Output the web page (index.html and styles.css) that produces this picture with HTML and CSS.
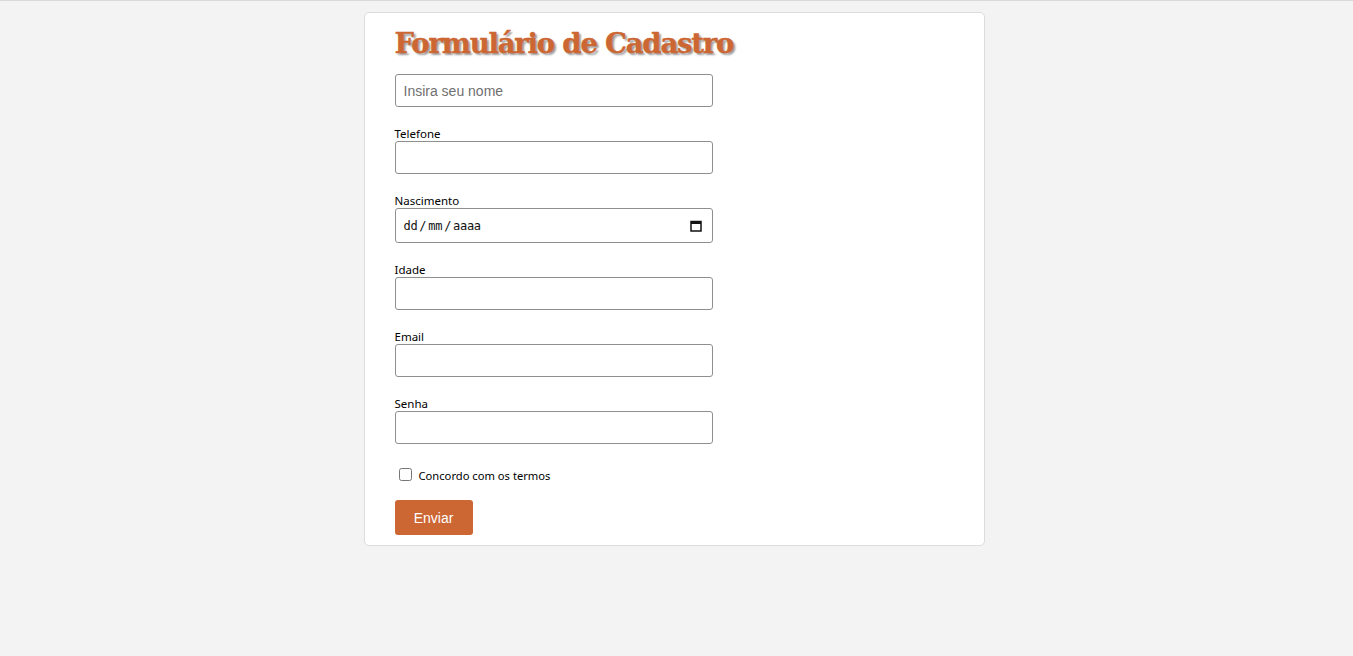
FILE: index.html
```html
<!DOCTYPE html>
<html lang="pt">
<head>
<meta charset="utf-8">
<title>Formulário de Cadastro</title>
<link rel="stylesheet" href="styles.css">
</head>
<body>
<div class="topline"></div>
<main class="card">
  <h1 class="title">Formulário de Cadastro</h1>
  <form class="form">
    <div class="group first">
      <input class="field" type="text" placeholder="Insira seu nome">
    </div>
    <div class="group">
      <label class="label">Telefone</label>
      <input class="field" type="text">
    </div>
    <div class="group">
      <label class="label">Nascimento</label>
      <div class="field date">
        <span class="date-text">dd<span class="sl">/</span>mm<span class="sl">/</span>aaaa</span>
        <svg class="cal" width="12" height="12" viewBox="0 0 12 12"><rect x="1" y="1.5" width="10" height="9.5" fill="none" stroke="#111" stroke-width="1.5"/><rect x="1" y="1.5" width="10" height="2.5" fill="#111"/></svg>
      </div>
    </div>
    <div class="group">
      <label class="label">Idade</label>
      <input class="field" type="text">
    </div>
    <div class="group">
      <label class="label">Email</label>
      <input class="field" type="text">
    </div>
    <div class="group">
      <label class="label">Senha</label>
      <input class="field" type="password">
    </div>
    <div class="check-row">
      <input class="check" type="checkbox" id="termos">
      <label for="termos" class="check-label">Concordo com os termos</label>
    </div>
    <button class="btn" type="button">Enviar</button>
  </form>
</main>
</body>
</html>
```

FILE: styles.css
```css
html, body {
  margin: 0;
  padding: 0;
}
body {
  background: #f3f3f3;
  font-family: "Noto Sans", "DejaVu Sans", sans-serif;
  min-height: 656px;
}
.topline {
  height: 1px;
  background: #d9d9d9;
}
.card {
  width: 621px;
  margin: 11px 0 0 calc(50% - 313px);
  background: #fff;
  border: 1px solid #dcdcdc;
  border-radius: 5px;
  padding: 12px 30px 10px;
  box-sizing: border-box;
}
.title {
  margin: 0;
  font-family: "DejaVu Serif", "Liberation Serif", serif;
  font-weight: bold;
  font-size: 27.5px;
  letter-spacing: -1.2px;
  line-height: 36px;
  color: #cc6633;
  text-shadow: 2px 2px 2px #9a9a9a;
  -webkit-text-stroke: 0.4px #cc6633;
}
.form {
  display: flex;
  flex-direction: column;
  margin-top: 13px;
}
.group {
  display: flex;
  flex-direction: column;
  margin-bottom: 20px;
}
.label {
  font-size: 11.5px;
  line-height: 14px;
  color: #000;
  height: 14px;
}
.field {
  width: 318px;
  height: 33px;
  box-sizing: border-box;
  border: 1px solid #8f8f8f;
  border-radius: 3px;
  padding: 0 8px;
  font-family: "Liberation Sans", Arial, sans-serif;
  font-size: 14px;
  background: #fff;
  outline: none;
}
.field::placeholder {
  color: #707070;
}
.date {
  height: 35px;
  display: flex;
  align-items: center;
  justify-content: space-between;
  padding: 0 10px 0 8px;
}
.date-text {
  font-family: "DejaVu Sans Mono", "Liberation Mono", monospace;
  font-size: 12px;
  color: #111;
  letter-spacing: -0.3px;
}
.sl {
  margin: 0 2px;
}
.cal {
  display: block;
}
.check-row {
  display: flex;
  align-items: center;
  margin-top: -3px;
  height: 26px;
}
.check {
  width: 13px;
  height: 13px;
  margin: 0 7px 0 4px;
}
.check-label {
  font-size: 11.2px;
  color: #000;
  padding-top: 3px;
}
.btn {
  margin-top: 13px;
  width: 78px;
  height: 35px;
  background: #cc6633;
  color: #fff;
  border: none;
  border-radius: 3px;
  font-family: "Liberation Sans", Arial, sans-serif;
  font-size: 14px;
  cursor: pointer;
}
```
